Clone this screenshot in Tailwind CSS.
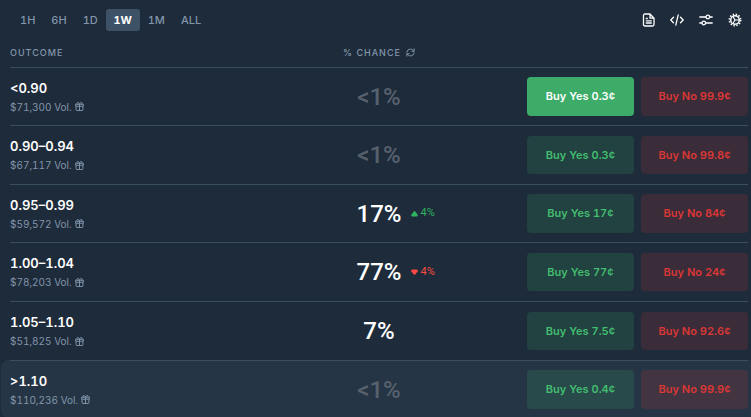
<!DOCTYPE html>
<html lang="en">
<head>
    <meta charset="UTF-8">
    <meta name="viewport" content="width=device-width, initial-scale=1.0">
    <title>Outcomes</title>
    <script src="https://cdn.jsdelivr.net/npm/@tailwindcss/browser@4"></script>
</head>
<body class="bg-[#1e2b3a] font-['Inter',sans-serif] tabular-nums text-white overflow-hidden">
    <!-- Shared icons -->
    <svg class="hidden">
        <symbol id="gift" viewBox="0 0 10 10">
            <g fill="none" stroke="currentColor" stroke-width="1.1" stroke-linejoin="round">
                <path d="M.7 2.500h8.600v2.200H.7zM1.200 4.700v3.800q0 1 1 1h5.600q1 0 1-1V4.700M5 2.500v7"/>
                <path d="M5 2.500C4.500.9 3.800.6 3 .6 1.600.6 1.600 2.500 2.800 2.500M5 2.500C5.500.9 6.200.6 7 .6 8.400.6 8.400 2.500 7.200 2.500"/>
            </g>
        </symbol>
    </svg>

    <div class="pl-[10px] pr-[3px]">
        <header class="flex items-center justify-between h-10">
            <nav class="flex items-center pl-[2px] text-[11px] font-medium text-[#8295ab]">
                <button class="h-[22px] px-2">1H</button>
                <button class="h-[22px] px-2">6H</button>
                <button class="h-[22px] px-2">1D</button>
                <button class="h-[22px] w-[34px] rounded-[3px] bg-[#3d5266] text-white font-bold">1W</button>
                <button class="h-[22px] px-2">1M</button>
                <button class="h-[22px] px-2">ALL</button>
            </nav>
            <div class="flex items-center gap-[15px] pr-[6px]">
                <button aria-label="Rules">
                    <svg class="size-[14px]" viewBox="0 0 14 14" fill="none" stroke="currentColor" stroke-width="1.3" stroke-linejoin="round" stroke-linecap="round">
                        <path d="M2.500 2.500q0-1.500 1.500-1.500H9l4 4.200v6.300q0 1.500-1.500 1.500H4q-1.500 0-1.500-1.500zM9 1v4.200h4M5.300 5.500h1M5.300 7.800h5M5.300 10h5"/>
                    </svg>
                </button>
                <button aria-label="Embed">
                    <svg class="size-[14px]" viewBox="0 0 14 14" fill="none" stroke="currentColor" stroke-width="1.3" stroke-linejoin="round" stroke-linecap="round">
                        <path d="M3.500 4.200L.8 7l2.700 2.800M10.500 4.200L13.200 7l-2.700 2.800M8.200 1.800L5.800 12.200"/>
                    </svg>
                </button>
                <button aria-label="Filters">
                    <svg class="size-[14px]" viewBox="0 0 14 14" fill="none" stroke="currentColor" stroke-width="1.3" stroke-linecap="round">
                        <path d="M.8 4h6M10.800 4h2.400M.8 10h2M6.800 10h6.400"/>
                        <circle cx="8.800" cy="4" r="1.800"/>
                        <circle cx="4.800" cy="10" r="1.800"/>
                    </svg>
                </button>
                <button aria-label="Settings">
                    <svg class="size-[14px]" viewBox="0 0 14 14" fill="none" stroke="currentColor">
                        <circle cx="7" cy="7" r="4.300" stroke-width="1.500"/>
                        <circle cx="7" cy="7" r="5.700" stroke-width="1.600" stroke-dasharray="1.400 1.584"/>
                        <path d="M7 7h4M7 7L4.800 3.200M7 7L4.800 10.800" stroke-width="1.200"/>
                    </svg>
                </button>
            </div>
        </header>

        <table class="relative isolate w-full table-fixed border-separate border-spacing-0">
            <thead>
                <tr class="h-[27px] text-[9px] leading-3 tracking-[1px] text-[#8295ab] [&_th]:p-0 [&_th]:pb-[2px] [&_th]:font-medium">
                    <th class="w-[221px] text-left">OUTCOME</th>
                    <th>
                        <div class="flex items-center justify-center gap-[5px]">
                            % CHANCE
                            <button aria-label="Refresh">
                                <svg class="block size-[9px]" viewBox="0 0 10 10" fill="none" stroke="currentColor" stroke-width="1.1" stroke-linecap="round" stroke-linejoin="round">
                                    <path d="M1 4.600C1.200 2.500 2.900 1.300 4.900 1.300 6.600 1.300 7.900 2 8.700 3.500M9 1v2.600H6.500M9 5.400C8.800 7.500 7.100 8.700 5.100 8.700 3.400 8.700 2.100 8 1.300 6.500M1 9V6.400h2.500"/>
                                </svg>
                            </button>
                        </div>
                    </th>
                    <th class="w-[221px]"></th>
                </tr>
            </thead>
            <tbody class="[&_td]:border-t [&_td]:border-[#3a4e62] [&_td]:p-0">
                <tr class="h-[58px]">
                    <td>
                        <p class="text-[13px] leading-5 font-semibold">&lt;0.90</p>
                        <p class="flex items-center gap-[3px] text-[10px] leading-[18px] text-[#8295ab]">$71,300 Vol. <svg class="size-[9px]"><use href="#gift"/></svg></p>
                    </td>
                    <td class="text-center font-['Roboto',sans-serif] text-2xl font-medium text-[#57616e]">&lt;1%</td>
                    <td>
                        <div class="grid grid-cols-2 gap-[7px] text-[11px] font-semibold">
                            <button class="h-[39px] rounded-[4px] bg-[#3dac68]">Buy Yes 0.3¢</button>
                            <button class="h-[39px] rounded-[4px] bg-[#3b2c39] text-[#da3736]">Buy No 99.9¢</button>
                        </div>
                    </td>
                </tr>
                <tr class="h-[59px]">
                    <td>
                        <p class="text-[13px] leading-5 font-semibold">0.90–0.94</p>
                        <p class="flex items-center gap-[3px] text-[10px] leading-[18px] text-[#8295ab]">$67,117 Vol. <svg class="size-[9px]"><use href="#gift"/></svg></p>
                    </td>
                    <td class="text-center font-['Roboto',sans-serif] text-2xl font-medium text-[#57616e]">&lt;1%</td>
                    <td>
                        <div class="grid grid-cols-2 gap-[7px] text-[11px] font-semibold">
                            <button class="h-[38px] rounded-[4px] bg-[#224141] text-[#42bd6e]">Buy Yes 0.3¢</button>
                            <button class="h-[38px] rounded-[4px] bg-[#3b2c39] text-[#da3736]">Buy No 99.8¢</button>
                        </div>
                    </td>
                </tr>
                <tr class="h-[58px]">
                    <td>
                        <p class="text-[13px] leading-5 font-semibold">0.95–0.99</p>
                        <p class="flex items-center gap-[3px] text-[10px] leading-[18px] text-[#8295ab]">$59,572 Vol. <svg class="size-[9px]"><use href="#gift"/></svg></p>
                    </td>
                    <td class="text-center font-['Roboto',sans-serif] text-2xl font-medium">
                        <span class="relative">17%
                            <span class="absolute left-full inset-y-0 ml-[10px] flex items-center gap-[2px] text-[11px] font-normal text-[#2fb25f]">
                                <svg class="w-[7px] h-[6px]" viewBox="0 0 7 6" fill="currentColor"><path d="M2.800.5q.7-.8 1.400 0L6.700 3.800Q7 5.500 5.800 5.500H1.200Q0 5.500.3 3.800z"/></svg>4%
                            </span>
                        </span>
                    </td>
                    <td>
                        <div class="grid grid-cols-2 gap-[7px] text-[11px] font-semibold">
                            <button class="h-[39px] rounded-[4px] bg-[#224141] text-[#42bd6e]">Buy Yes 17¢</button>
                            <button class="h-[39px] rounded-[4px] bg-[#3b2c39] text-[#da3736]">Buy No 84¢</button>
                        </div>
                    </td>
                </tr>
                <tr class="h-[59px]">
                    <td>
                        <p class="text-[13px] leading-5 font-semibold">1.00–1.04</p>
                        <p class="flex items-center gap-[3px] text-[10px] leading-[18px] text-[#8295ab]">$78,203 Vol. <svg class="size-[9px]"><use href="#gift"/></svg></p>
                    </td>
                    <td class="text-center font-['Roboto',sans-serif] text-2xl font-medium">
                        <span class="relative">77%
                            <span class="absolute left-full inset-y-0 ml-[10px] flex items-center gap-[2px] text-[11px] font-normal text-[#fb4a43]">
                                <svg class="w-[7px] h-[6px]" viewBox="0 0 7 6" fill="currentColor"><path d="M2.800 5.500q.7.800 1.400 0L6.700 2.200Q7 .5 5.800.5H1.200Q0 .5.3 2.200z"/></svg>4%
                            </span>
                        </span>
                    </td>
                    <td>
                        <div class="grid grid-cols-2 gap-[7px] text-[11px] font-semibold">
                            <button class="h-[38px] rounded-[4px] bg-[#224141] text-[#42bd6e]">Buy Yes 77¢</button>
                            <button class="h-[38px] rounded-[4px] bg-[#3b2c39] text-[#da3736]">Buy No 24¢</button>
                        </div>
                    </td>
                </tr>
                <tr class="h-[59px]">
                    <td>
                        <p class="text-[13px] leading-5 font-semibold">1.05–1.10</p>
                        <p class="flex items-center gap-[3px] text-[10px] leading-[18px] text-[#8295ab]">$51,825 Vol. <svg class="size-[9px]"><use href="#gift"/></svg></p>
                    </td>
                    <td class="text-center font-['Roboto',sans-serif] text-2xl font-medium">7%</td>
                    <td>
                        <div class="grid grid-cols-2 gap-[7px] text-[11px] font-semibold">
                            <button class="h-[38px] rounded-[4px] bg-[#224141] text-[#42bd6e]">Buy Yes 7.5¢</button>
                            <button class="h-[38px] rounded-[4px] bg-[#3b2c39] text-[#da3736]">Buy No 92.6¢</button>
                        </div>
                    </td>
                </tr>
                <!-- Hovered row, highlight bleeds past the dividers -->
                <tr class="h-[58px] relative">
                    <td>
                        <div class="absolute inset-y-0 -left-[9px] -right-[3px] -z-10 rounded-l-lg bg-[#253545]"></div>
                        <p class="text-[13px] leading-5 font-semibold">&gt;1.10</p>
                        <p class="flex items-center gap-[3px] text-[10px] leading-[18px] text-[#8295ab]">$110,236 Vol. <svg class="size-[9px]"><use href="#gift"/></svg></p>
                    </td>
                    <td class="text-center font-['Roboto',sans-serif] text-2xl font-medium text-[#57616e]">&lt;1%</td>
                    <td>
                        <div class="grid grid-cols-2 gap-[7px] text-[11px] font-semibold">
                            <button class="h-[39px] rounded-[4px] bg-[#294a4b] text-[#42bd6e]">Buy Yes 0.4¢</button>
                            <button class="h-[39px] rounded-[4px] bg-[#423541] text-[#da3736]">Buy No 99.9¢</button>
                        </div>
                    </td>
                </tr>
            </tbody>
        </table>
    </div>
</body>
</html>
